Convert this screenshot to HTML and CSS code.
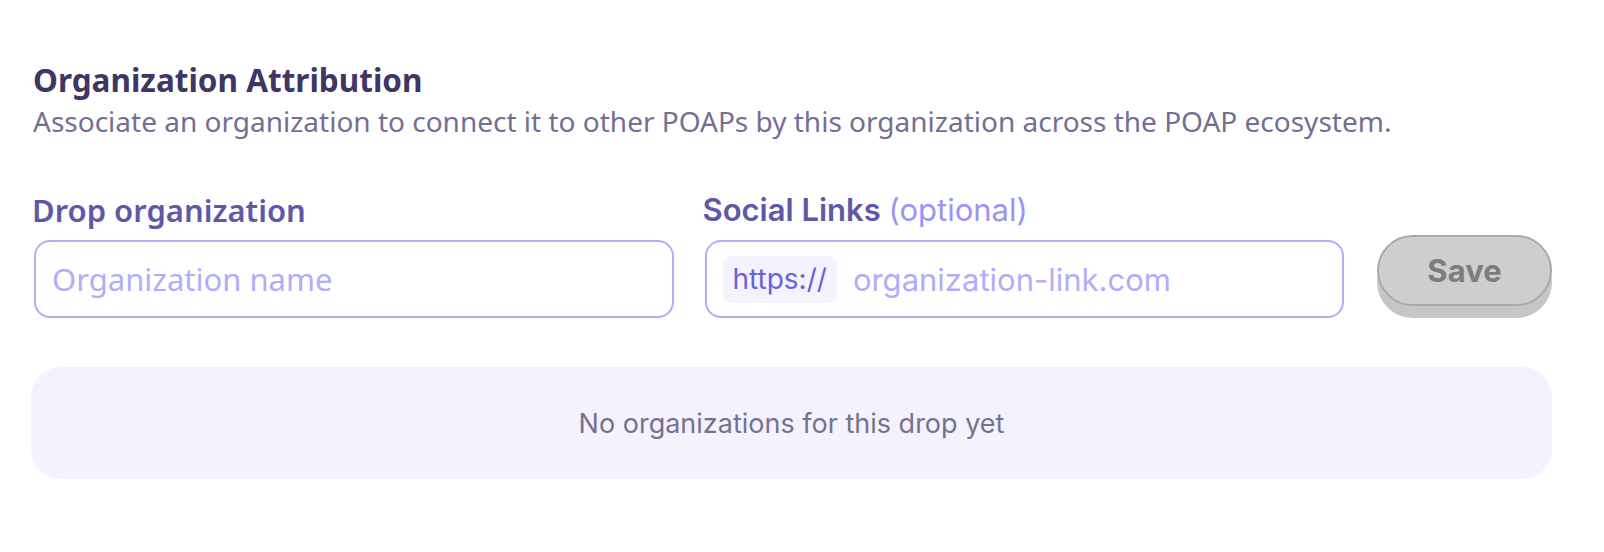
FILE: index.html
```html
<!DOCTYPE html>
<html lang="en">
<head>
    <meta charset="UTF-8">
    <meta name="viewport" content="width=device-width, initial-scale=1.0">
    <title>Organization Attribution</title>
    <link rel="stylesheet" href="styles.css">
</head>
<body>
    <div class="attribution">
        <h2>Organization Attribution</h2>
        <p class="subtitle">Associate an organization to connect it to other POAPs by this organization across the POAP ecosystem.</p>

        <form class="org-form" onsubmit="return false">
            <div class="field">
                <label for="orgName">Drop organization</label>
                <div class="input-box">
                    <input id="orgName" type="text" placeholder="Organization name">
                </div>
            </div>
            <div class="field">
                <label for="orgLink" class="label-alt">Social Links <span class="optional">(optional)</span></label>
                <div class="input-box">
                    <span class="prefix">https://</span>
                    <input id="orgLink" type="text" placeholder="organization-link.com">
                </div>
            </div>
            <button type="button" class="save-btn" disabled>Save</button>
        </form>

        <div class="empty-list">No organizations for this drop yet</div>
    </div>
</body>
</html>
```

FILE: styles.css
```css
body {
    margin: 0;
    background: #fff;
    font-family: "Noto Sans", Roboto, sans-serif;
}
.attribution {
    padding: 61px 52px 0 31px;
}
.attribution h2 {
    margin: 0 0 0 2px;
    font-size: 31.5px;
    line-height: 38px;
    font-weight: 700;
    color: #3f3566;
}
.subtitle {
    margin: 4px 0 0 2px;
    font-size: 28px;
    line-height: 36px;
    color: #746e94;
}
.org-form {
    display: flex;
    align-items: flex-end;
    gap: 31px;
    margin-top: 52px;
    padding-left: 3px;
}
.field {
    flex: 1 1 0;
    min-width: 0;
    display: flex;
    flex-direction: column;
}
.field label {
    font-size: 31px;
    line-height: 38px;
    font-weight: 600;
    color: #5f58a8;
    margin: 0 0 11px -2px;
}
.field .label-alt {
    font-family: Inter, sans-serif;
}
.optional {
    font-weight: 400;
    color: #9b93f5;
}
.input-box {
    display: flex;
    align-items: center;
    gap: 16px;
    height: 74px;
    padding: 0 16px;
    border: 2px solid #b3acf8;
    border-radius: 16px;
}
.input-box input {
    flex: 1;
    min-width: 0;
    border: 0;
    outline: none;
    padding: 0;
    background: transparent;
    font-family: "Noto Sans", Roboto, sans-serif;
    font-size: 31px;
    color: #3f3566;
}
.input-box input::placeholder {
    color: #b3acfa;
}
#orgLink {
    font-family: Inter, sans-serif;
}
.prefix {
    display: flex;
    align-items: center;
    height: 47px;
    padding: 0 10px;
    border-radius: 8px;
    background: #f3f2fd;
    font-family: Inter, sans-serif;
    font-size: 28px;
    color: #6a60d8;
}
.save-btn {
    width: 175px;
    height: 71px;
    margin: 0 0 12px 2px;
    border: 2px solid #a9a9a9;
    border-radius: 36px;
    background: #cecece;
    box-shadow: 0 12px 0 #c6c6c6;
    font-family: Inter, sans-serif;
    font-size: 31px;
    font-weight: 700;
    color: #7d7d7d;
}
.empty-list {
    margin-top: 49px;
    height: 112px;
    display: flex;
    align-items: center;
    justify-content: center;
    border-radius: 30px;
    background: #f3f2fd;
    font-family: Inter, sans-serif;
    font-size: 27px;
    color: #77718f;
}
```
